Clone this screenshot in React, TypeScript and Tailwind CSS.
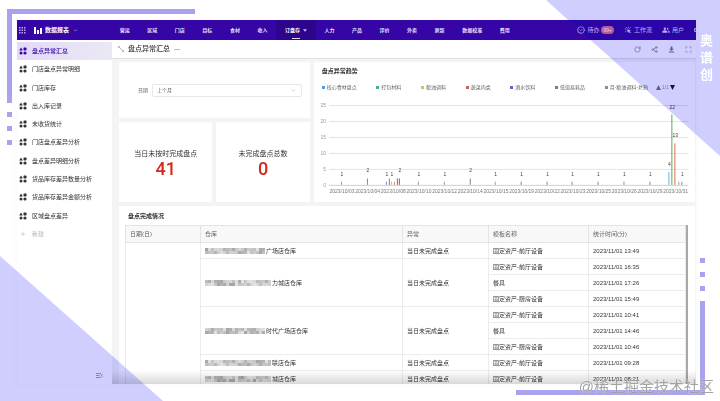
import React from 'react';
import { CheckCircle2, ChevronDown, Plus, RotateCw, Scan, Share2 } from 'lucide-react';

const navItems = ['营运', '区域', '门店', '目标', '食材', '收入', '订盘存', '人力', '产品', '评价', '外卖', '更新', '数据校准', '费用'];

const sideItems = [
  '盘点异常汇总',
  '门店盘点异常明细',
  '门店库存',
  '出入库记录',
  '未收货统计',
  '门店盘点差异分析',
  '盘点差异明细分析',
  '货品库存差异数量分析',
  '货品库存差异金额分析',
  '区域盘点差异'
];

const legend = [
  { name: '核心食材盘点', color: 'bg-[#5b9bd8]' },
  { name: '打包材料', color: 'bg-[#4fae92]' },
  { name: '粮油调料', color: 'bg-[#d6bf4e]' },
  { name: '蔬菜肉类', color: 'bg-[#bf6368]' },
  { name: '酒水饮料', color: 'bg-[#6b5fc7]' },
  { name: '低值易耗品', color: 'bg-[#7d7d7d]' },
  { name: '月-粮油调料-复熟', color: 'bg-[#8c8c8c]' }
];

const days = ['03', '04', '08', '10', '12', '14', '15', '19', '22', '23', '25', '26', '29', '31'];

// x position, value, colour, whether the value is printed above
const bars: [number, number, string, boolean][] = [
  [21, 1, '#8f9aa3', true],
  [47, 2, '#6f8fc4', true],
  [66, 1, '#8b80c8', true],
  [69, 2, '#4fa383', false],
  [71, 1, '#d6bf4e', true],
  [74, 1, '#c98c6a', false],
  [77, 2, '#8a6a6a', false],
  [79, 2, '#a05a5f', true],
  [98, 1, '#9a9a9a', true],
  [124, 1, '#9a9a9a', true],
  [150, 2, '#7d8a80', true],
  [175, 1, '#9a9a9a', true],
  [201, 1, '#7d8a80', true],
  [227, 1, '#8a8a8a', true],
  [252, 1, '#8a8a8a', true],
  [278, 1, '#8a8a8a', true],
  [304, 1, '#8a8a8a', true],
  [330, 1, '#7d8a80', true],
  [349, 4, '#5bb8dc', true],
  [352, 22, '#5aa860', true],
  [355, 13, '#d9734a', true],
  [359, 1, '#a5a5a5', false],
  [362, 1, '#8a8a8a', true]
];

const groups = [
  { masked: 20, store: '广场店仓库', rows: [['固定资产-前厅设备', '2023/11/01 13:49']] },
  {
    masked: 22,
    store: '力城店仓库',
    rows: [['固定资产-前厅设备', '2023/11/01 16:35'], ['餐具', '2023/11/01 17:26'], ['固定资产-厨房设备', '2023/11/01 15:49']]
  },
  {
    masked: 20,
    store: '时代广场店仓库',
    rows: [['固定资产-前厅设备', '2023/11/01 10:41'], ['餐具', '2023/11/01 14:46'], ['固定资产-厨房设备', '2023/11/01 10:46']]
  },
  { masked: 22, store: '联店仓库', rows: [['固定资产-前厅设备', '2023/11/01 09:28']] },
  { masked: 22, store: '城店仓库', rows: [['固定资产-前厅设备', '2023/11/01 08:21']] }
];

// Mosaic that hides the first part of a store name
const Mosaic = ({ count, seed }: { count: number; seed: number }) => (
  <span className="grid grid-flow-col grid-rows-2 h-[6px]" aria-hidden="true">
    {Array.from({ length: count * 2 }, (_, i) => {
      const shade = 165 + ((i * 17 + seed * 23 + ((i * i) % 11) * 5) % 65);
      return <span key={i} className="w-[3px] h-[3px]" style={{ backgroundColor: `rgb(${shade},${shade},${shade})` }} />;
    })}
  </span>
);

const ShapesIcon = () => (
  <svg viewBox="0 0 16 16" className="size-2 shrink-0" fill="currentColor">
    <path d="M4 1l3.6 6H.4z" />
    <rect x="9" y="1" width="6" height="6" rx="1.5" />
    <circle cx="4" cy="12" r="3" />
    <circle cx="12" cy="12" r="3.200" />
  </svg>
);

const WorkflowIcon = () => (
  <svg viewBox="0 0 24 24" className="size-2" fill="none" stroke="currentColor" strokeWidth="2">
    <path d="M2 9h5M6 3l3 4M13 2v5M20 4l-4 4M3 18l4-3" />
    <path d="M9 10l12 3-5 2 5 5-2 2-5-5-2 5z" fill="currentColor" stroke="none" />
  </svg>
);

const PeopleIcon = () => (
  <svg viewBox="0 0 24 24" className="size-2" fill="currentColor">
    <path d="M16 11a3 3 0 1 0 0-6 3 3 0 0 0-1.500.4 5 5 0 0 1 0 5.200A3 3 0 0 0 16 11zM8.500 11.500a3.500 3.500 0 1 0 0-7 3.500 3.500 0 0 0 0 7zm0 1.500C5.500 13 1 14.500 1 17.500V20h15v-2.500C16 14.500 11.500 13 8.500 13zm8 0c1.500 1 2.500 2.500 2.500 4.500V20h4v-2.500c0-2.800-3.500-4.200-6.500-4.500z" />
  </svg>
);

const DownloadIcon = () => (
  <svg viewBox="0 0 24 24" className="size-[7px]" fill="currentColor">
    <path d="M9 2h6v7h5l-8 8-8-8h5zM3 19h18v3H3z" />
  </svg>
);

const NodesIcon = () => (
  <svg viewBox="0 0 14 14" className="size-[6px]" fill="none" stroke="#888" strokeWidth="1.5">
    <path d="M3 3l8 8M1 5V1h4M13 9v4H9" />
  </svg>
);

const Chart = () => (
  <svg viewBox="0 0 374 96" className="w-full" fontSize="5" fill="#777">
    {[25, 20, 15, 10, 5, 0].map((tick, i) => (
      <g key={tick}>
        <rect x="11" y={4 + i * 16} width="360" height="1" fill={tick === 0 ? '#d0d0d0' : '#e4e4e4'} />
        <text x="8" y={6 + i * 16} textAnchor="end" fill="#999">{tick}</text>
      </g>
    ))}
    {days.map((day, i) => (
      <text key={day} x={24 + (i * 360) / 14} y="92" textAnchor="middle">{`2023/10/${day}`}</text>
    ))}
    {bars.map(([x, value, color, label]) => (
      <g key={x}>
        <rect x={x + 2} y={84 - value * 3.2} width="1" height={value * 3.2} fill={color} />
        {label && (
          <text x={x + 3} y={value === 1 ? 75 : 78 - value * 3.2} textAnchor="middle" fill="#444">{value}</text>
        )}
      </g>
    ))}
  </svg>
);

const App = () => {
  return (
    <div
      lang="zh-CN"
      className="relative h-screen overflow-hidden bg-white pt-5 pb-[17px] pl-[17px] flex text-[6px] leading-[8px] text-[#333] font-['Liberation_Sans','Noto_Sans_CJK_SC',sans-serif]"
    >
      {/* Background decoration */}
      <div className="absolute top-0 right-0 w-[174px] h-[156px] bg-[#cfceff] [clip-path:polygon(0_0,100%_0,100%_100%)]" />
      <div className="absolute bottom-0 left-0 w-[163px] h-[145px] bg-[#cfceff] [clip-path:polygon(0_0,100%_100%,0_100%)]" />
      <div className="absolute top-[9px] left-[7px] w-[188px] h-[94px] border-t-[5px] border-l-[5px] border-[#a9a3ee] [clip-path:polygon(0_0,100%_0,100%_5px,5px_5px,5px_100%,0_100%)]" />
      <div className="absolute top-[112px] left-[7px] flex flex-col gap-[9px]">
        <span className="size-[5px] bg-[#a9a3ee]" />
        <span className="size-[5px] bg-[#a9a3ee]" />
        <span className="size-[5px] bg-[#a9a3ee]" />
      </div>
      <div className="absolute bottom-[6px] right-[15px] w-[189px] h-[94px] border-b-[5px] border-r-[5px] border-[#a9a3ee] [clip-path:polygon(0_89px,184px_89px,184px_0,100%_0,100%_100%,0_100%)]" />
      <div className="absolute bottom-[110px] right-[15px] flex flex-col gap-[9px]">
        <span className="size-[5px] bg-[#a9a3ee]" />
        <span className="size-[5px] bg-[#a9a3ee]" />
        <span className="size-[5px] bg-[#a9a3ee]" />
      </div>

      {/* App window */}
      <div className="flex-1 min-w-0 flex flex-col overflow-hidden bg-white mix-blend-multiply shadow-[0_0_6px_rgba(0,0,0,0.03)]">
        <header className="h-5 shrink-0 flex items-stretch overflow-hidden bg-[#3505a5] text-white">
          <div className="w-[94px] shrink-0 flex items-center pl-[2px]">
            <svg viewBox="0 0 14 14" className="size-[7px]" fill="#b9a8ec">
              {[0, 5, 10].map(y => [0, 5, 10].map(x => <rect key={`${x}-${y}`} x={x} y={y} width="3" height="3" />))}
            </svg>
            <svg viewBox="0 0 8 7" className="w-2 h-[7px] ml-2" fill="currentColor">
              <rect x="0" y="0" width="2" height="7" />
              <rect x="3" y="3" width="2" height="4" />
              <rect x="6" y="1" width="2" height="6" />
            </svg>
            <button className="flex items-center gap-1 ml-[3px] font-bold">
              数据报表
              <ChevronDown className="size-[5px]" />
            </button>
          </div>
          <nav className="basis-3/5 shrink-0 flex text-[5px] font-bold">
            {navItems.map(item => {
              const active = item === '订盘存';
              return (
                <a
                  key={item}
                  href="#"
                  className={`relative flex-auto flex items-center justify-center gap-[3px] whitespace-nowrap ${active ? 'bg-[#2d058c]' : 'text-[#e6dffa]'}`}
                >
                  {item}
                  {active && (
                    <>
                      <svg viewBox="0 0 10 6" className="w-1 h-[3px]" fill="#c9bdf2">
                        <path d="M0 0h10L5 6z" />
                      </svg>
                      <span className="absolute bottom-px left-1/2 -ml-1 w-2 h-px bg-[#e6dffa]" />
                    </>
                  )}
                </a>
              );
            })}
          </nav>
          <div className="flex-1 flex items-center justify-end gap-[10px] text-[#e2daf8] whitespace-nowrap">
            <button className="flex items-center gap-[2px]">
              <CheckCircle2 className="size-2" />
              待办
              <span className="rounded-full bg-[#e8708a] px-[2px] text-[5px] text-white">99+</span>
            </button>
            <button className="flex items-center gap-[2px]">
              <WorkflowIcon />
              工作流
            </button>
            <button className="flex items-center gap-[2px]">
              <PeopleIcon />
              用户
            </button>
            <span className="w-[2px] h-1 rounded-l-full border border-r-0 border-[#e2daf8]" />
          </div>
        </header>

        <div className="flex-1 min-h-0 flex">
          {/* Sidebar */}
          <aside className="w-[95px] shrink-0 flex flex-col pt-[2px] pb-1">
            <nav className="h-[201px] shrink-0 flex flex-col">
              {sideItems.map((item, index) => (
                <a
                  key={item}
                  href="#"
                  className={`flex-1 flex items-center gap-[5px] pl-[2px] ${index === 0 ? 'bg-gradient-to-r from-[#e3daf8] to-[#ebe8f4] text-[#3505a5] font-medium' : ''}`}
                >
                  <ShapesIcon />
                  {item}
                </a>
              ))}
              <button className="flex-1 flex items-center gap-[6px] pl-[3px] text-[#b3b3b3]">
                <Plus className="size-[6px]" />
                新建
              </button>
            </nav>
            <button className="mt-auto ml-auto mr-[9px]" aria-label="收起">
              <svg viewBox="0 0 14 10" className="w-[7px] h-[5px] mb-[2px]" fill="none" stroke="#888" strokeWidth="1.5">
                <path d="M0 1h10M0 5h7M0 9h10M13.500 2L10 5l3.500 3" />
              </svg>
            </button>
          </aside>

          {/* Content */}
          <main className="relative flex-1 min-w-0 flex flex-col bg-[#f4f4f4]">
            <div className="h-[19px] shrink-0 flex items-center bg-white border-b border-[#e0e0e0] pl-[6px] pr-1">
              <NodesIcon />
              <h1 className="ml-1 text-[7px] font-medium">盘点异常汇总</h1>
              <span className="ml-1 w-[6px] h-px bg-[#bbb]" />
              <div className="ml-auto flex gap-[10px] text-[#777]">
                <button aria-label="刷新"><RotateCw className="size-[7px]" /></button>
                <button aria-label="分享"><Share2 className="size-[7px]" /></button>
                <button aria-label="下载"><DownloadIcon /></button>
                <button aria-label="全屏"><Scan className="size-[7px]" /></button>
              </div>
            </div>

            <div className="flex-1 min-h-0 flex flex-col gap-1 pt-[3px] pl-[7px] pr-px">
              <div className="shrink-0 grid grid-cols-[1fr_2fr] gap-1">
                <div className="flex flex-col gap-1">
                  <div className="h-14 bg-white rounded-[1px] flex items-center gap-1 pl-[19px] pr-2 text-[5px] text-[#666]">
                    <label htmlFor="date">日期</label>
                    <div className="relative flex-1">
                      <select
                        id="date"
                        className="block w-full h-[13px] appearance-none rounded-[2px] border border-[#e8e8e8] bg-white pl-1 outline-none"
                      >
                        <option>上个月</option>
                      </select>
                      <ChevronDown className="absolute right-[6px] top-1 size-[5px] text-[#999] pointer-events-none" />
                    </div>
                  </div>
                  <div className="grid grid-cols-2 gap-1">
                    {[['当日未按时完成盘点', '41'], ['未完成盘点总数', '0']].map(([title, value]) => (
                      <div key={title} className="h-20 bg-white rounded-[1px] flex flex-col items-center justify-center pt-1">
                        <p className="text-[7px] leading-[10px]">{title}</p>
                        <p className="text-[18px] leading-[20px] font-medium text-[#d4281c] font-['Roboto',sans-serif]">{value}</p>
                      </div>
                    ))}
                  </div>
                </div>

                <div className="bg-white rounded-[1px] pt-[5px] px-1 flex flex-col">
                  <h2 className="pl-1 font-bold">盘点异常趋势</h2>
                  <div className="mt-2 pl-1 pr-4 flex items-center gap-2 text-[5px] text-[#666] whitespace-nowrap">
                    <div className="flex-1 flex items-center justify-between">
                      {legend.map(item => (
                        <span key={item.name} className="flex items-center gap-[2px]">
                          <span className={`size-[3px] ${item.color}`} />
                          {item.name}
                        </span>
                      ))}
                    </div>
                    <span className="flex items-center gap-px text-[#999]">
                      <svg viewBox="0 0 10 10" className="size-[5px]" fill="#777"><path d="M5 0l5 10H0z" /></svg>
                      1/1
                      <svg viewBox="0 0 10 10" className="size-[5px]" fill="#1a1640"><path d="M0 0h10L5 10z" /></svg>
                    </span>
                  </div>
                  <div className="mt-[10px]">
                    <Chart />
                  </div>
                </div>
              </div>

              <div className="flex-1 min-h-0 overflow-hidden bg-white rounded-[1px] pt-[6px] pl-[6px] pr-[7px]">
                <h2 className="pl-[3px] font-bold">盘点完成情况</h2>
                <div className="mt-[5px] flex">
                  <table className="flex-1 table-fixed border-collapse text-left [&_td]:p-0 [&_td]:pl-1 [&_th]:p-0 [&_th]:pl-1 [&_td]:border [&_th]:border [&_td]:border-[#ececec] [&_th]:border-[#e4e4e4]">
                    <colgroup>
                      <col className="w-[75px]" />
                      <col className="w-[202px]" />
                      <col className="w-[86px]" />
                      <col className="w-[100px]" />
                      <col className="w-[97px]" />
                    </colgroup>
                    <thead>
                      <tr className="h-[17px] bg-[#f8f8f8] text-[#666]">
                        {['日期(日)', '仓库', '异常', '模板名称', '统计时间(分)'].map(head => (
                          <th key={head} className="font-normal">{head}</th>
                        ))}
                      </tr>
                    </thead>
                    <tbody>
                      {groups.map((group, g) =>
                        group.rows.map(([template, time], r) => (
                          <tr key={time} className="h-4">
                            {g === 0 && <td rowSpan={9} />}
                            {r === 0 && (
                              <>
                                <td rowSpan={group.rows.length}>
                                  <div className="flex items-center gap-px">
                                    <Mosaic count={group.masked} seed={g} />
                                    {group.store}
                                  </div>
                                </td>
                                <td rowSpan={group.rows.length}>当日未完成盘点</td>
                              </>
                            )}
                            <td>{template}</td>
                            <td>{time}</td>
                          </tr>
                        ))
                      )}
                    </tbody>
                  </table>
                  <span className="w-[2px] bg-[#a8a8a8]" />
                </div>
              </div>
            </div>
            <div className="absolute inset-x-0 bottom-0 h-[14px] bg-gradient-to-b from-black/0 to-black/15 pointer-events-none" />
          </main>
        </div>
      </div>

      {/* Brand */}
      <div className="relative w-6 shrink-0 pt-3 pl-1 text-[13px] leading-[17px] font-bold text-white">
        <p className="w-[13px] break-all">奥谱创</p>
      </div>

      <p className="absolute right-[6px] bottom-1 text-[15px] leading-[20px] text-[#8c8c8c]/80 [text-shadow:0_0_1px_#fff]">
        @稀土掘金技术社区
      </p>
    </div>
  );
};

export default App;
